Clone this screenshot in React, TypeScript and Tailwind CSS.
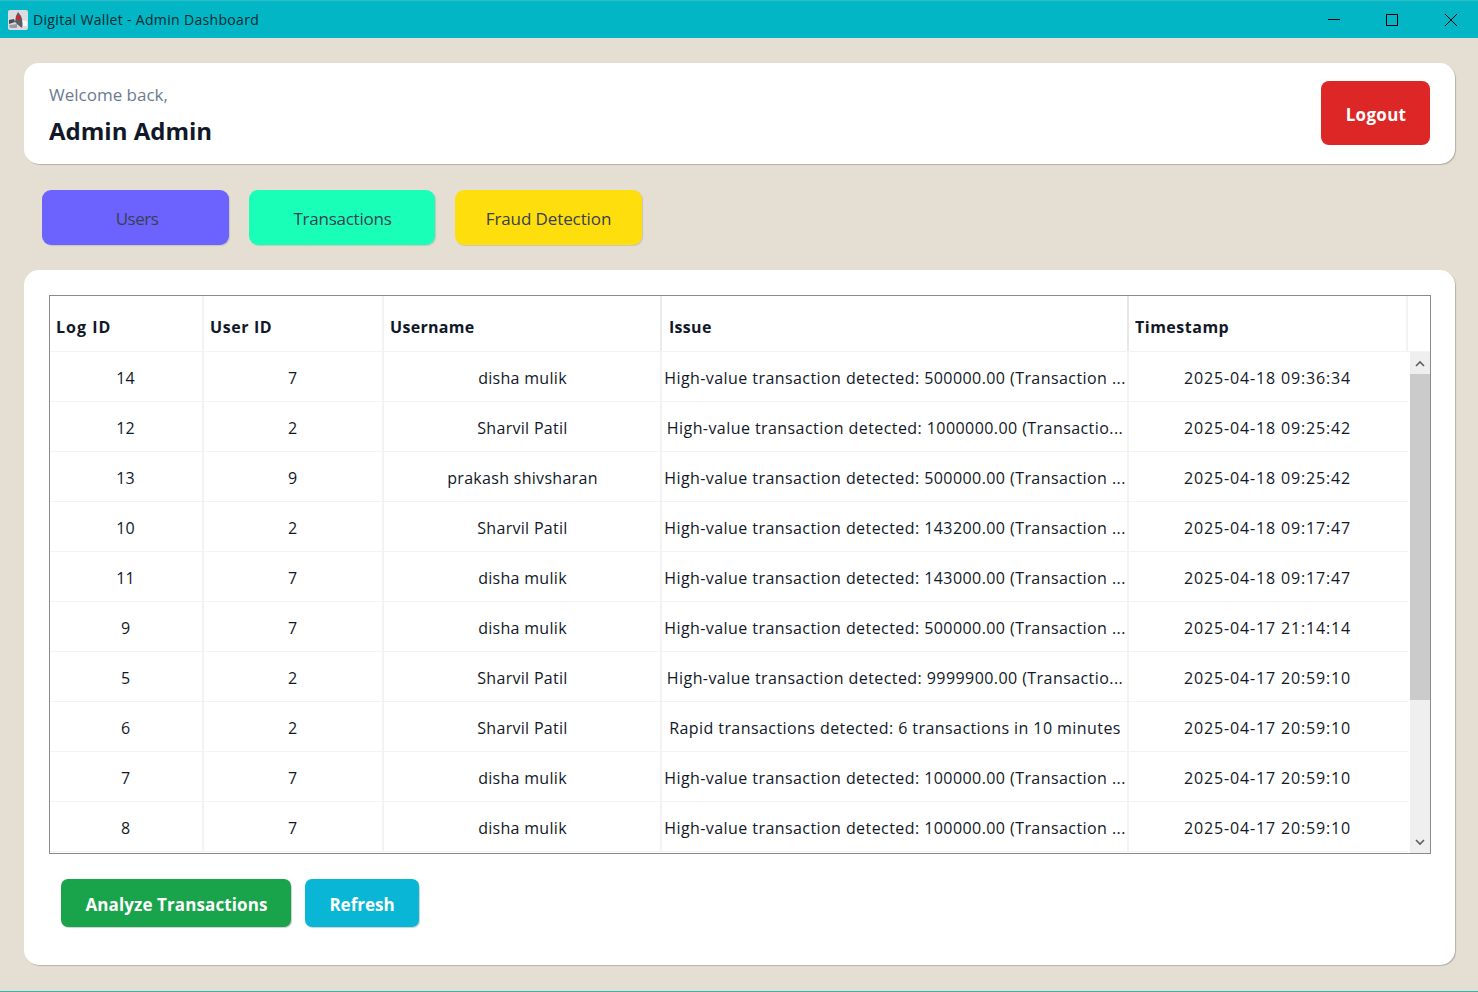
import React from "react";

const rows = [
  ["14", "7", "disha mulik", "High-value transaction detected: 500000.00 (Transaction ...", "2025-04-18 09:36:34"],
  ["12", "2", "Sharvil Patil", "High-value transaction detected: 1000000.00 (Transactio...", "2025-04-18 09:25:42"],
  ["13", "9", "prakash shivsharan", "High-value transaction detected: 500000.00 (Transaction ...", "2025-04-18 09:25:42"],
  ["10", "2", "Sharvil Patil", "High-value transaction detected: 143200.00 (Transaction ...", "2025-04-18 09:17:47"],
  ["11", "7", "disha mulik", "High-value transaction detected: 143000.00 (Transaction ...", "2025-04-18 09:17:47"],
  ["9", "7", "disha mulik", "High-value transaction detected: 500000.00 (Transaction ...", "2025-04-17 21:14:14"],
  ["5", "2", "Sharvil Patil", "High-value transaction detected: 9999900.00 (Transactio...", "2025-04-17 20:59:10"],
  ["6", "2", "Sharvil Patil", "Rapid transactions detected: 6 transactions in 10 minutes", "2025-04-17 20:59:10"],
  ["7", "7", "disha mulik", "High-value transaction detected: 100000.00 (Transaction ...", "2025-04-17 20:59:10"],
  ["8", "7", "disha mulik", "High-value transaction detected: 100000.00 (Transaction ...", "2025-04-17 20:59:10"],
];

const font = { fontFamily: '"Open Sans", "Noto Sans", sans-serif' };

export default function App() {
  return (
    <div className="w-[1478px] h-[992px] bg-[#e5dfd3] flex flex-col overflow-hidden text-[#111827]" style={font}>
      <div className="h-[38px] shrink-0 bg-[#02b6c5] border-t border-[#2dbcc8] flex items-center justify-between pl-[8px]">
        <div className="flex items-center gap-[5px]">
          <svg width="20" height="20" viewBox="0 0 20 20">
            <rect x="0" y="0" width="20" height="20" rx="2" fill="#dcdce0" />
            <path d="M10 2 L13 6 L15 12 L14 18 L10 15 L7 12 L8 6 Z" fill="#5c5c66" />
            <path d="M1 10 L6 9 L7 12 L1 14 Z" fill="#4a4a54" />
            <path d="M1 15 L9 14 L9 18 L2 18 Z" fill="#9a9aa2" />
            <path d="M14 10 L19 11 L19 16 L15 16 Z" fill="#f7f7f7" />
            <circle cx="10.5" cy="7.5" r="2.2" fill="#d9202c" />
          </svg>
          <span className="text-[14px] text-[#0a2a33] tracking-[0.33px]">Digital Wallet - Admin Dashboard</span>
        </div>
        <div className="flex items-center h-full">
          <svg width="58" height="36" viewBox="0 0 58 36"><path d="M20 17.5 H32" stroke="#000" strokeWidth="1" /></svg>
          <svg width="58" height="36" viewBox="0 0 58 36"><rect x="20.5" y="12.5" width="11" height="11" fill="none" stroke="#000" strokeWidth="1" /></svg>
          <svg width="54" height="36" viewBox="0 0 54 36"><path d="M21 12 L33 24 M33 12 L21 24" stroke="#000" strokeWidth="1" /></svg>
        </div>
      </div>

      <div className="flex-1 flex flex-col pl-[24px] pr-[23px] pt-[25px] pb-[26px]">
        <div className="h-[101px] shrink-0 bg-white rounded-[15px] shadow-[1px_1px_1px_#b5b0a6] flex items-start justify-between pl-[25px] pr-[25px] pt-[18px]">
          <div className="flex flex-col mt-[3px]">
            <span className="text-[17px] leading-[22px] text-[#6b7b8f]">Welcome back,</span>
            <span className="text-[24px] leading-[32px] mt-[9px] font-bold text-[#111827]">Admin Admin</span>
          </div>
          <button className="w-[109px] h-[64px] pt-[3px] pl-[1px] bg-[#dd2626] rounded-[8px] text-white text-[17px] font-bold tracking-[0.3px]">Logout</button>
        </div>

        <div className="flex gap-[20px] pl-[18px] mt-[26px] shrink-0">
          <button className="w-[187px] h-[55px] pt-[2px] pl-[3px] rounded-[9px] bg-[#6c63ff] text-[#374151] text-[17px] tracking-[-0.5px] shadow-[1px_1px_1px_#c9c4b8]">Users</button>
          <button className="w-[186px] h-[55px] pt-[2px] pl-[1px] rounded-[9px] bg-[#1affb8] text-[#374151] text-[17px] tracking-[-0.25px] shadow-[1px_1px_1px_#c9c4b8]">Transactions</button>
          <button className="w-[187px] h-[55px] pt-[2px] rounded-[9px] bg-[#ffde0d] text-[#374151] text-[17px] tracking-[-0.1px] shadow-[1px_1px_1px_#c9c4b8]">Fraud Detection</button>
        </div>

        <div className="flex-1 mt-[25px] bg-white rounded-[15px] shadow-[1px_1px_1px_#b5b0a6] pl-[25px] pr-[24px] pt-[25px] flex flex-col">
          <div className="h-[559px] shrink-0 border border-[#8a8a90] flex flex-col overflow-hidden">
            <div className="h-[56px] shrink-0 flex border-b border-[#f3f3f3] font-bold text-[16px] text-[#111827]">
              <div className="w-[154px] border-r-2 border-[#f3f3f3] flex items-center pl-[6px] pt-[6px] tracking-[1px]">Log ID</div>
              <div className="w-[180px] border-r-2 border-[#f3f3f3] flex items-center pl-[6px] pt-[6px] tracking-[0.6px]">User ID</div>
              <div className="w-[278px] border-r-2 border-[#ececec] flex items-center pl-[6px] pt-[6px] tracking-[0.3px]">Username</div>
              <div className="w-[467px] border-r-2 border-[#e8e8e8] flex items-center pl-[7px] pt-[6px] tracking-[0.3px]">Issue</div>
              <div className="w-[279px] border-r-2 border-[#f3f3f3] flex items-center pl-[6px] pt-[6px] tracking-[0.5px]">Timestamp</div>
              <div className="flex-1" />
            </div>
            <div className="flex-1 flex min-h-0">
              <div className="w-[1358px] shrink-0 flex flex-col">
                {rows.map((r) => (
                  <div key={r[0]} className="h-[50px] shrink-0 flex border-b border-[#f3f3f3] text-[16px] text-[#111827]">
                    <div className="w-[154px] border-r-2 border-[#f3f3f3] flex items-center justify-center pt-[2px] pr-[1px]">{r[0]}</div>
                    <div className="w-[180px] border-r-2 border-[#f3f3f3] flex items-center justify-center pt-[2px] pr-[1px]">{r[1]}</div>
                    <div className="w-[278px] border-r-2 border-[#f3f3f3] flex items-center justify-center pt-[2px] pl-[1px] tracking-[0.3px]">{r[2]}</div>
                    <div className="w-[467px] border-r-2 border-[#f3f3f3] flex items-center justify-center pt-[2px] pl-[1px] whitespace-nowrap tracking-[0.43px]">{r[3]}</div>
                    <div className="w-[279px] flex items-center justify-center pt-[2px] pr-[2px] tracking-[0.85px]">{r[4]}</div>
                  </div>
                ))}
              </div>
              <div className="ml-[2px] flex-1 bg-[#efefef] flex flex-col">
                <div className="h-[22px] shrink-0 flex items-center justify-center pr-[1px]">
                  <svg width="10" height="7" viewBox="0 0 10 7"><path d="M1 6 L5 2 L9 6" fill="none" stroke="#5f5f5f" strokeWidth="1.6" /></svg>
                </div>
                <div className="h-[326px] shrink-0 bg-[#cbcbcb]" />
                <div className="flex-1 flex items-end justify-center pb-[7px] pr-[1px]">
                  <svg width="10" height="7" viewBox="0 0 10 7"><path d="M1 1 L5 5 L9 1" fill="none" stroke="#5f5f5f" strokeWidth="1.6" /></svg>
                </div>
              </div>
            </div>
          </div>

          <div className="flex gap-[14px] pl-[12px] mt-[25px]">
            <button className="w-[230px] h-[48px] pt-[3px] pl-[1px] rounded-[7px] bg-[#19a44c] text-white text-[17px] font-bold tracking-[0.1px] shadow-[1px_1px_1px_#cfcfcf]">Analyze Transactions</button>
            <button className="w-[114px] h-[48px] pt-[3px] rounded-[7px] bg-[#09b6d6] text-white text-[17px] font-bold shadow-[1px_1px_1px_#cfcfcf]">Refresh</button>
          </div>
        </div>
      </div>
      <div className="h-px shrink-0 bg-[#2fb4bd]" />
    </div>
  );
}
